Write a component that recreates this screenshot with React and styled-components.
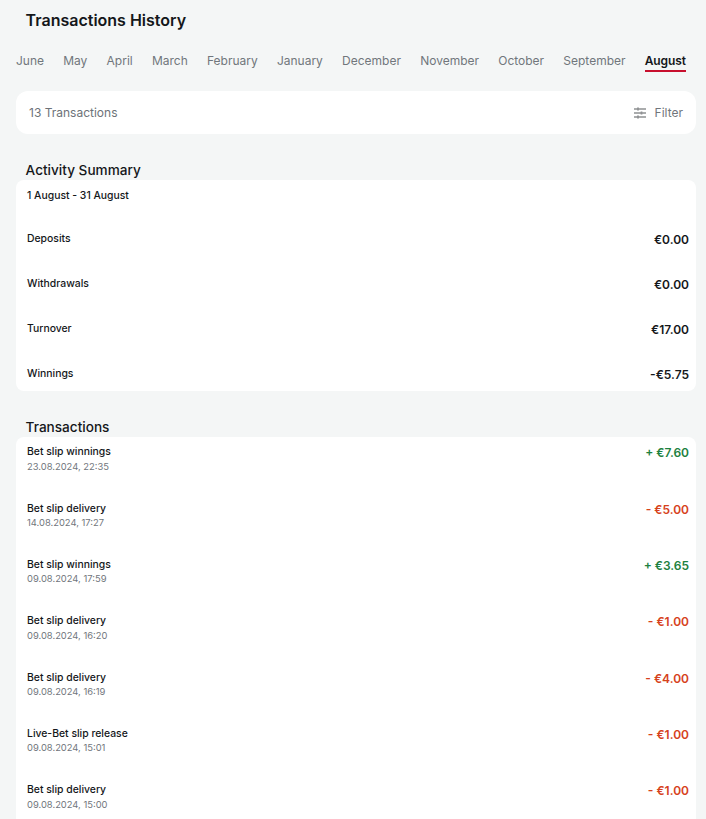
import React from "react";
import styled, { createGlobalStyle } from "styled-components";

const months = [
  "June",
  "May",
  "April",
  "March",
  "February",
  "January",
  "December",
  "November",
  "October",
  "September",
  "August",
];

const summary = [
  { label: "Deposits", value: "€0.00" },
  { label: "Withdrawals", value: "€0.00" },
  { label: "Turnover", value: "€17.00" },
  { label: "Winnings", value: "-€5.75" },
];

const transactions = [
  { title: "Bet slip winnings", date: "23.08.2024, 22:35", amount: "+ €7.60", win: true },
  { title: "Bet slip delivery", date: "14.08.2024, 17:27", amount: "- €5.00" },
  { title: "Bet slip winnings", date: "09.08.2024, 17:59", amount: "+ €3.65", win: true },
  { title: "Bet slip delivery", date: "09.08.2024, 16:20", amount: "- €1.00" },
  { title: "Bet slip delivery", date: "09.08.2024, 16:19", amount: "- €4.00" },
  { title: "Live-Bet slip release", date: "09.08.2024, 15:01", amount: "- €1.00" },
  { title: "Bet slip delivery", date: "09.08.2024, 15:00", amount: "- €1.00" },
];

const FilterIcon = () => (
  <svg width="12" height="12" viewBox="0 0 12 12" fill="none">
    <path d="M0 2H12M0 6H12M0 10H12" stroke="#8f9193" strokeWidth="1.5" />
    <path d="M4 0.5V3.5M7.5 4.5V7.5M4 8.5V11.5" stroke="#8f9193" strokeWidth="1.8" />
  </svg>
);

const App = () => {
  return (
    <Page>
      <GlobalStyle />
      <Title>Transactions History</Title>

      <MonthTabs>
        {months.map((month) => (
          <MonthTab key={month} $active={month === "August"}>
            {month}
          </MonthTab>
        ))}
      </MonthTabs>

      <FilterBar>
        <Count>13 Transactions</Count>
        <FilterButton>
          <FilterIcon />
          Filter
        </FilterButton>
      </FilterBar>

      <SectionTitle>Activity Summary</SectionTitle>
      <SummaryCard>
        <Period>1 August - 31 August</Period>
        {summary.map((row) => (
          <SummaryRow key={row.label}>
            <RowLabel>{row.label}</RowLabel>
            <Amount>{row.value}</Amount>
          </SummaryRow>
        ))}
      </SummaryCard>

      <SectionTitle>Transactions</SectionTitle>
      <TransactionCard>
        {transactions.map((item) => (
          <TransactionRow key={item.date + item.amount}>
            <div>
              <RowLabel>{item.title}</RowLabel>
              <DateText>{item.date}</DateText>
            </div>
            <Amount $color={item.win ? "#1d8140" : "#d6421c"}>{item.amount}</Amount>
          </TransactionRow>
        ))}
      </TransactionCard>
    </Page>
  );
};

export default App;

const GlobalStyle = createGlobalStyle`
  html, body {
    margin: 0;
    height: 100%;
    overflow: hidden;
    background: #f4f6f6;
  }
  body {
    font-family: Inter, "Liberation Sans", sans-serif;
  }
`;

const Page = styled.div`
  height: 819px;
  overflow: hidden;
  padding: 0 10px 0 16px;
  box-sizing: border-box;
  background: #f4f6f6;
`;

const Title = styled.h1`
  margin: 0;
  padding: 11px 0 0 9.6px;
  font-size: 16px;
  line-height: 19px;
  font-weight: 600;
  color: #14171a;
`;

const MonthTabs = styled.div`
  display: flex;
  justify-content: space-between;
  margin-top: 23px;
  padding-right: 10px;
`;

const MonthTab = styled.div`
  font-size: 12px;
  line-height: 16px;
  padding-bottom: 1px;
  font-weight: ${(p) => (p.$active ? 600 : 400)};
  letter-spacing: ${(p) => (p.$active ? "-0.1px" : "0")};
  color: ${(p) => (p.$active ? "#14171a" : "#71767c")};
  border-bottom: 2px solid ${(p) => (p.$active ? "#c8102e" : "transparent")};
`;

const FilterBar = styled.div`
  display: flex;
  align-items: center;
  justify-content: space-between;
  height: 43px;
  margin-top: 19px;
  padding: 0 13px;
  background: #fff;
  border-radius: 12px;
`;

const Count = styled.span`
  font-size: 12px;
  color: #6d7278;
`;

const FilterButton = styled.span`
  display: flex;
  align-items: center;
  gap: 9px;
  font-size: 12px;
  color: #71767c;
`;

const SectionTitle = styled.h2`
  margin: 28px 0 0;
  padding-left: 9.6px;
  font-size: 13.6px;
  line-height: 17px;
  font-weight: 500;
  color: #14171a;
`;

const SummaryCard = styled.section`
  margin-top: 1px;
  height: 211px;
  padding: 8px 7px 0 11px;
  box-sizing: border-box;
  background: #fff;
  border-radius: 8px;
`;

const Period = styled.div`
  font-size: 10.4px;
  line-height: 15px;
  font-weight: 500;
  color: #14171a;
  margin-bottom: 19px;
`;

const SummaryRow = styled.div`
  display: flex;
  justify-content: space-between;
  align-items: flex-start;
  height: 45px;
  padding-top: 9px;
  box-sizing: border-box;
`;

const RowLabel = styled.div`
  font-size: 10.4px;
  line-height: 15px;
  font-weight: 500;
  color: #14171a;
`;

const Amount = styled.div`
  margin-top: 1px;
  font-size: 12px;
  line-height: 16px;
  font-weight: 600;
  color: ${(p) => p.$color || "#14171a"};
`;

const TransactionCard = styled.section`
  margin-top: 1px;
  padding: 7.3px 7px 0 11px;
  background: #fff;
  border-radius: 8px 8px 0 0;
  height: 400px;
`;

const TransactionRow = styled.div`
  display: flex;
  justify-content: space-between;
  align-items: flex-start;
  height: 56.33px;
`;

const DateText = styled.div`
  margin-top: 0.4px;
  font-size: 9.4px;
  line-height: 14px;
  color: #71767c;
`;
